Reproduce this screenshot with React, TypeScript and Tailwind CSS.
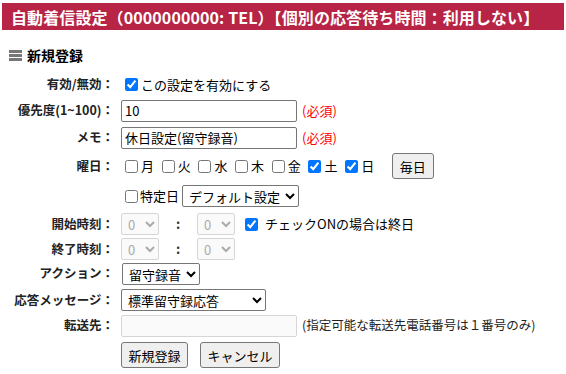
import React, { useState } from 'react'

// ─── Constants ──────────────────────────────────────
const DAYS = [
    { key: 'mon', label: '月' },
    { key: 'tue', label: '火' },
    { key: 'wed', label: '水' },
    { key: 'thu', label: '木' },
    { key: 'fri', label: '金' },
    { key: 'sat', label: '土' },
    { key: 'sun', label: '日' },
]

const FONT = "font-['Noto_Sans_CJK_JP','Noto_Sans',sans-serif]"

const inputCls = 'h-[22px] w-[176px] rounded-[2px] border border-[#767676] bg-white px-[3px] text-[13px] leading-none text-black outline-none'
const selectCls = 'h-[22px] rounded-[2px] border border-[#767676] bg-white pl-[2px] text-[13px] leading-none text-black outline-none'
const disabledSelectCls = 'h-[22px] w-[38px] rounded-[2px] border border-[#d6d6d6] bg-[#fafafa] pl-[2px] text-[13px] leading-none text-[#aaa]'
const buttonCls = 'rounded-[3px] border border-[#767676] bg-[#efefef] text-[13px] leading-none text-black'

// ─── Row ────────────────────────────────────────────
function Row({ label, h, children }: { label: string; h: string; children?: React.ReactNode }) {
    return (
        <div className={`flex items-center ${h}`}>
            <div className="w-[121px] shrink-0 pr-[7px] text-right text-[12.5px] font-bold text-[#222]">{label}</div>
            <div className="flex items-center">{children}</div>
        </div>
    )
}

// ─── Component ──────────────────────────────────────
export default function App() {
    const [enabled, setEnabled] = useState(true)
    const [days, setDays] = useState<Record<string, boolean>>({ sat: true, sun: true })
    const [allDay, setAllDay] = useState(true)

    return (
        <div className={`h-[374px] w-[566px] overflow-hidden bg-white text-black ${FONT}`}>
            {/* Title bar */}
            <div className="mx-[2px] mt-[3px] flex h-[27px] items-center bg-[#b72445] pl-[9px] text-[16px] font-bold tracking-[0.1px] text-white">
                自動着信設定（0000000000: TEL）【個別の応答待ち時間：利用しない】
            </div>

            {/* Section heading */}
            <div className="flex h-[42px] items-center gap-[5px] pl-[9px] pt-[8px]">
                <svg width="13" height="11" viewBox="0 0 13 11">
                    <rect x="0" y="0" width="13" height="3" fill="#777" />
                    <rect x="0" y="4" width="13" height="3" fill="#777" />
                    <rect x="0" y="8" width="13" height="3" fill="#777" />
                </svg>
                <span className="text-[14px] font-bold">新規登録</span>
            </div>

            <Row label="有効/無効：" h="h-[25px]">
                <label className="ml-[4px] flex items-center gap-[3px] text-[13px]">
                    <input type="checkbox" checked={enabled} onChange={e => setEnabled(e.target.checked)} className="m-0 h-[13px] w-[13px]" />
                    この設定を有効にする
                </label>
            </Row>

            <Row label="優先度(1~100)：" h="h-[27px]">
                <input className={inputCls} defaultValue="10" />
                <span className="ml-[5px] text-[13px] text-[#ff0000]">(必須)</span>
            </Row>

            <Row label="メモ：" h="h-[27px]">
                <input className={inputCls} defaultValue="休日設定(留守録音)" />
                <span className="ml-[5px] text-[13px] text-[#ff0000]">(必須)</span>
            </Row>

            <Row label="曜日：" h="h-[30px]">
                <div className="ml-[4px] flex items-center">
                    {DAYS.map(d => (
                        <label key={d.key} className="flex w-[36.7px] items-center gap-[3px] text-[13px]">
                            <input
                                type="checkbox"
                                checked={!!days[d.key]}
                                onChange={e => setDays(p => ({ ...p, [d.key]: e.target.checked }))}
                                className="m-0 h-[13px] w-[13px]"
                            />
                            {d.label}
                        </label>
                    ))}
                    <button className={`${buttonCls} ml-[10px] h-[26px] w-[42px]`}>毎日</button>
                </div>
            </Row>

            <Row label="" h="h-[30px]">
                <label className="ml-[4px] flex items-center gap-[2px] text-[13px]">
                    <input type="checkbox" className="m-0 h-[13px] w-[13px]" />
                    特定日
                </label>
                <select className={`${selectCls} ml-[3px] w-[117px]`} defaultValue="default">
                    <option value="default">デフォルト設定</option>
                </select>
            </Row>

            <Row label="開始時刻：" h="h-[26px]">
                <select className={disabledSelectCls} disabled>
                    <option>0</option>
                </select>
                <span className="w-[38px] text-center text-[13px] font-bold text-[#333]">:</span>
                <select className={disabledSelectCls} disabled>
                    <option>0</option>
                </select>
                <label className="ml-[10px] flex items-center gap-[7px] text-[13px]">
                    <input type="checkbox" checked={allDay} onChange={e => setAllDay(e.target.checked)} className="m-0 h-[13px] w-[13px]" />
                    チェックONの場合は終日
                </label>
            </Row>

            <Row label="終了時刻：" h="h-[24px]">
                <select className={disabledSelectCls} disabled>
                    <option>0</option>
                </select>
                <span className="w-[38px] text-center text-[13px] font-bold text-[#333]">:</span>
                <select className={disabledSelectCls} disabled>
                    <option>0</option>
                </select>
            </Row>

            <Row label="アクション：" h="h-[25px]">
                <select className={`${selectCls} ml-[1px] w-[78px]`} defaultValue="rec">
                    <option value="rec">留守録音</option>
                </select>
            </Row>

            <Row label="応答メッセージ：" h="h-[28px]">
                <select className={`${selectCls} w-[145px]`} defaultValue="std">
                    <option value="std">標準留守録応答</option>
                </select>
            </Row>

            <Row label="転送先：" h="h-[23px]">
                <input className="h-[22px] w-[176px] rounded-[2px] border border-[#d6d6d6] bg-[#fafafa]" disabled />
                <span className="ml-[5px] text-[12.5px] text-[#222]">(指定可能な転送先電話番号は１番号のみ)</span>
            </Row>

            <Row label="" h="h-[36px]">
                <button className={`${buttonCls} h-[26px] w-[67px]`}>新規登録</button>
                <button className={`${buttonCls} ml-[12px] h-[26px] w-[80px]`}>キャンセル</button>
            </Row>
        </div>
    )
}
